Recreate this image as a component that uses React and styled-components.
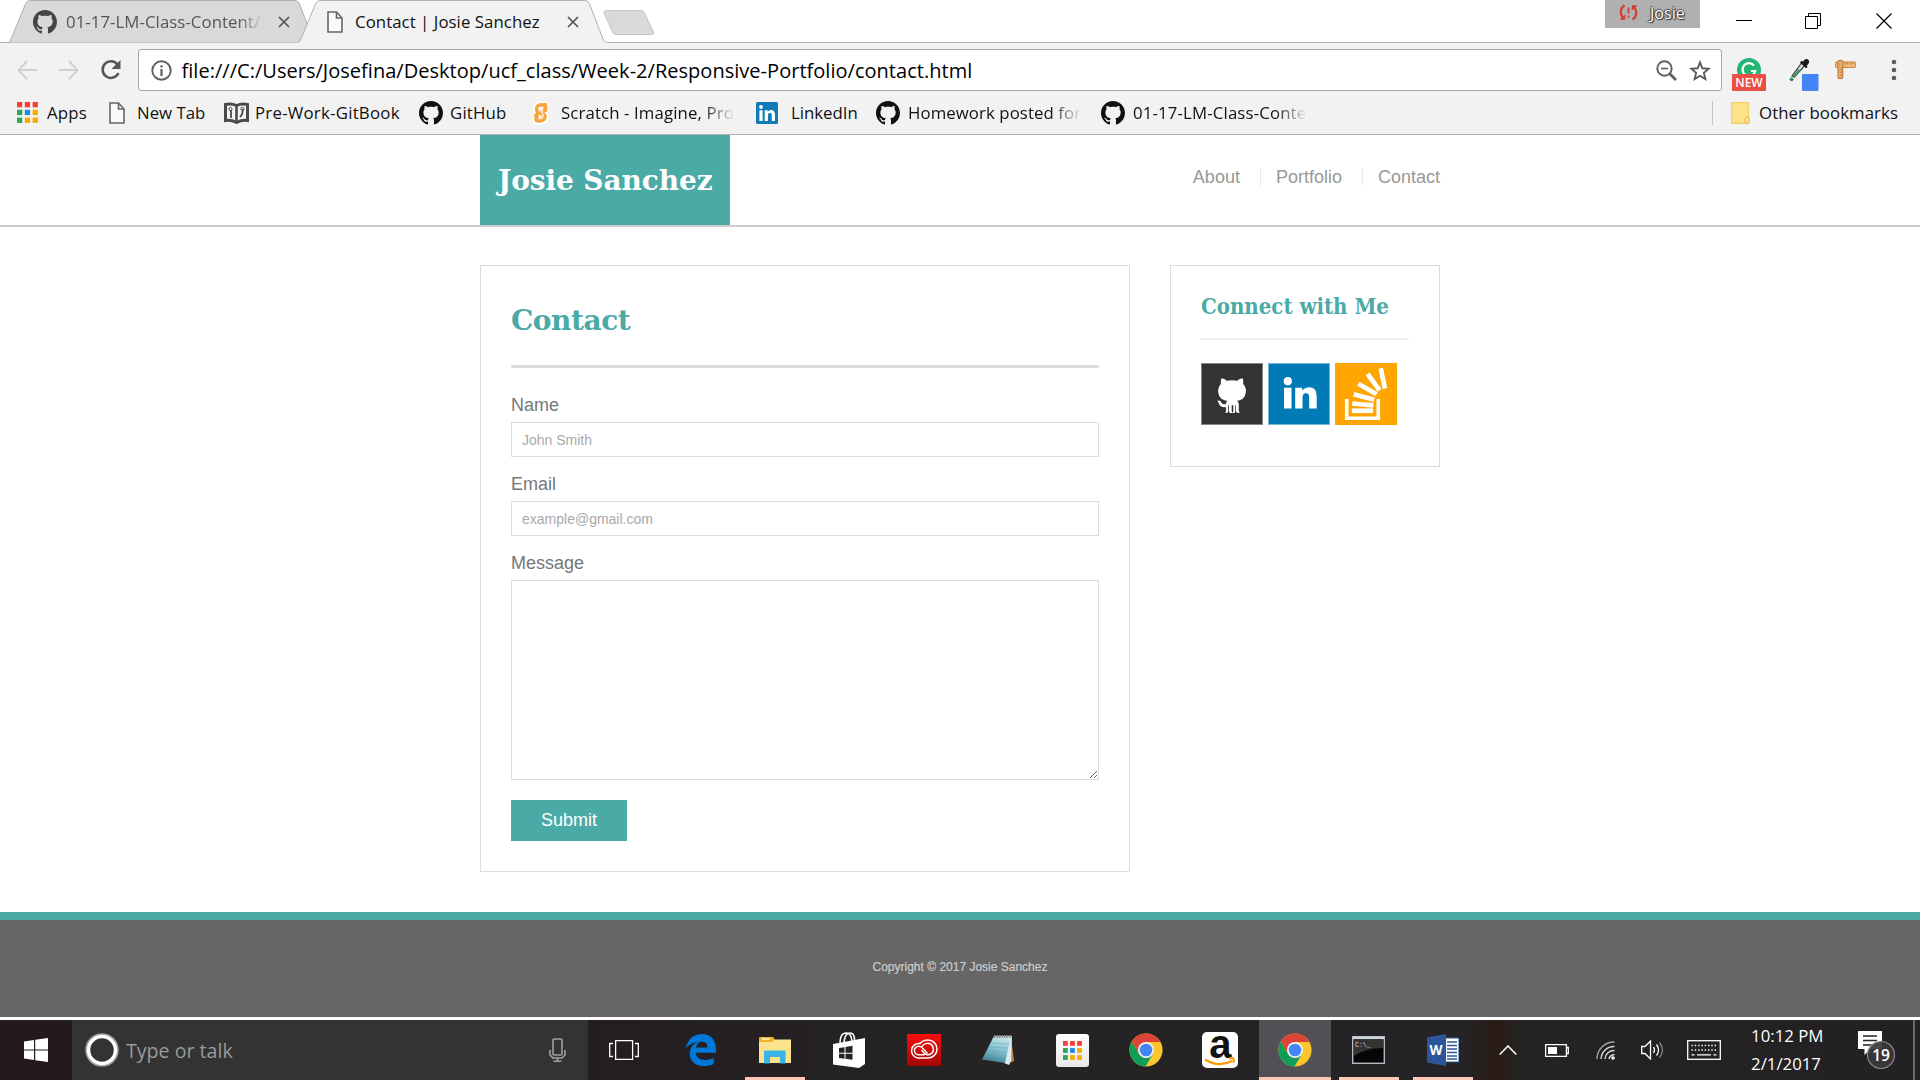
import React from "react";
import styled, { createGlobalStyle } from "styled-components";

const UI = '"Open Sans", "Noto Sans", sans-serif';
const SANS = '"Liberation Sans", Arial, sans-serif';
const SERIF = '"DejaVu Serif", Georgia, serif';
const SERIF_NARROW = '"DejaVu Serif Condensed", "DejaVu Serif", Georgia, serif';
const TEAL = "#4aaaa5";

const GlobalStyle = createGlobalStyle`
  * { box-sizing: border-box; }
  body { margin: 0; background: #fff; overflow: hidden; }
  svg { display: block; flex: none; }
`;

const Screen = styled.div`
  width: 1920px;
  height: 1080px;
  display: flex;
  flex-direction: column;
  overflow: hidden;
  background: #fff;
`;

/* ---------- Browser ---------- */

const TabStrip = styled.div`
  height: 43px;
  flex: none;
  display: flex;
  padding-left: 8px;
  font: 16.8px ${UI};
  letter-spacing: 0.06px;
  background: linear-gradient(#b1b1b1, #b1b1b1) 0 42px / 100% 1px no-repeat;
`;

const Tab = styled.div`
  display: grid;
  width: 310px;
  height: 43px;
  margin-right: -20px;
  z-index: ${(p) => (p.$active ? 2 : 1)};
  color: ${(p) => (p.$active ? "#111" : "#555")};
  > * { grid-area: 1 / 1; }
`;

const TabBody = styled.div`
  display: flex;
  align-items: center;
  padding: 0 25px 0 ${(p) => (p.$active ? 29 : 25)}px;
  z-index: 1;
`;

const Label = styled.span`
  flex: none;
  white-space: pre;
  width: ${(p) => (p.$w ? p.$w + "px" : "auto")};
  margin-left: ${(p) => p.$ml || 0}px;
  mask-image: ${(p) => (p.$fade ? `linear-gradient(90deg, #000 calc(100% - ${p.$fade}px), transparent)` : "none")};
`;

const TabClose = styled.div`
  margin-left: ${(p) => p.$ml}px;
`;

const NewTab = styled.div`
  margin: 10px 0 0 15px;
`;

const WindowButtons = styled.div`
  display: flex;
  margin-left: auto;
`;

const Profile = styled.div`
  width: 95px;
  height: 28px;
  display: flex;
  align-items: center;
  gap: 12px;
  padding: 0 0 3px 14px;
  background: #b0b0b0;
  color: #fff;
  font-size: 16px;
  text-shadow: 0 0 1px #333, 1px 1px 1px #333, -1px 0 1px #444, 0 -1px 1px #555;
  margin-right: 8px;
`;

const WinButton = styled.div`
  width: ${(p) => p.$w}px;
  height: 41px;
  display: flex;
  align-items: center;
  justify-content: center;
`;

const Toolbar = styled.div`
  height: 48px;
  flex: none;
  display: flex;
  align-items: flex-start;
  background: #f2f2f2;
  padding: 6px 0 0 17px;
`;

const NavIcons = styled.div`
  height: 42px;
  width: 121px;
  display: flex;
  align-items: center;
  gap: 21.500px;
`;

const Omnibox = styled.div`
  width: 1584px;
  height: 42px;
  display: flex;
  align-items: center;
  background: #fff;
  border: 1px solid #a8a8a8;
  border-radius: 3px;
  padding: 0 10px 0 12px;
  font: 20px ${UI};
  letter-spacing: 0.025px;
  color: #000;
`;

const OmniActions = styled.div`
  display: flex;
  gap: 12px;
  margin-left: auto;
`;

const Extensions = styled.div`
  display: flex;
  height: 42px;
  padding-left: 10px;
  align-items: center;
`;

const Bookmarks = styled.div`
  height: 44px;
  flex: none;
  display: flex;
  align-items: center;
  background: #f2f2f2;
  border-bottom: 1px solid #b1b1b1;
  font: 16.8px ${UI};
  letter-spacing: 0.08px;
  color: #111;
  padding-left: 17px;
`;

const Bookmark = styled.div`
  width: ${(p) => p.$w}px;
  letter-spacing: ${(p) => p.$ls || 0}px;
  display: flex;
  flex: none;
  align-items: center;
`;

const OtherBookmarks = styled.div`
  display: flex;
  align-items: center;
  margin-left: auto;
  width: 208px;
  height: 24px;
  border-left: 1px solid #c4c4c4;
  padding-left: 18px;
`;

/* ---------- Page ---------- */

const SiteHeader = styled.header`
  flex: none;
  height: 92px;
  border-bottom: 2px solid #ccc;
  font-family: ${SANS};
`;

const Container = styled.div`
  width: 960px;
  margin: 0 auto;
  display: flex;
  justify-content: space-between;
  align-items: flex-start;
`;

const Brand = styled.div`
  width: 250px;
  height: 90px;
  padding: 0 0 0 18px;
  display: flex;
  align-items: center;
  background: ${TEAL};
  color: #fff;
  font: bold 28px ${SERIF};
  letter-spacing: -0.1px;
  white-space: nowrap;
`;

const Menu = styled.nav`
  display: flex;
  margin-top: 33px;
`;

const MenuItem = styled.a`
  font-size: 18px;
  line-height: 18px;
  color: #999;
  & + & {
    margin-left: 20px;
    padding-left: 15px;
    border-left: 1px solid #eaeaea;
  }
`;

const Main = styled.main`
  flex: none;
  height: 685px;
  padding-top: 38px;
  font-family: ${SANS};
`;

const Card = styled.section`
  width: ${(p) => p.$w}px;
  border: 1px solid #ddd;
  background: #fff;
  padding: ${(p) => p.$pad};
`;

const PageTitle = styled.h1`
  margin: 0 0 27px;
  padding-bottom: 24px;
  border-bottom: 3px solid #ddd;
  font: bold 28px/40px ${SERIF};
  letter-spacing: -0.45px;
  color: ${TEAL};
`;

const SideTitle = styled.h2`
  margin: 0 0 23px;
  padding-bottom: 17px;
  border-bottom: 2px solid #eee;
  font: bold 22px/30px ${SERIF_NARROW};
  color: ${TEAL};
  white-space: nowrap;
`;

const FieldLabel = styled.label`
  display: block;
  font-size: 18px;
  line-height: 20px;
  margin-bottom: 7px;
  color: #777;
`;

const Input = styled.input`
  display: block;
  width: 100%;
  height: 35px;
  margin-bottom: 17px;
  border: 1px solid #ddd;
  padding: 0 10px;
  font: 14px ${SANS};
  outline: none;
  &::placeholder { color: #a9a9a9; opacity: 1; }
`;

const TextArea = styled.textarea`
  display: block;
  width: 100%;
  height: 200px;
  border: 1px solid #ddd;
  margin: 0 0 20px;
  outline: none;
  resize: both;
`;

const Submit = styled.button`
  display: block;
  width: 116px;
  height: 41px;
  border: 0;
  padding: 0;
  background: ${TEAL};
  color: #fff;
  font: 18px ${SANS};
`;

const SocialRow = styled.div`
  display: flex;
  gap: 5px;
`;

const SiteFooter = styled.footer`
  flex: none;
  height: 105px;
  margin-bottom: 3px;
  border-top: 8px solid ${TEAL};
  background: #666;
  color: #ccc;
  font: 12px/94px ${SANS};
  -webkit-text-stroke: 0.2px #ccc;
  text-align: center;
`;

/* ---------- Taskbar ---------- */

const Taskbar = styled.div`
  flex: none;
  height: 60px;
  display: flex;
  font-family: ${UI};
  color: #fff;
  background: linear-gradient(90deg, transparent 1470px, #2a1b14 1495px, transparent 1520px),
    linear-gradient(90deg, #24191f 0, #241d22 600px, #252324 900px, #252325 1400px, #232124 1920px);
  > * { flex: none; }
`;

const StartCell = styled.div`
  width: 72px;
  display: flex;
  align-items: center;
  justify-content: center;
`;

const Search = styled.div`
  width: 516px;
  display: flex;
  align-items: center;
  background: #333;
  padding: 0 22px 0 13px;
  font-size: 19.6px;
  color: #9a9a9a;
`;

const MicSlot = styled.div`
  margin-left: auto;
`;

const TaskView = styled.div`
  width: 76px;
  padding-left: 21px;
  display: flex;
  align-items: center;
`;

const TaskButton = styled.div`
  width: 74.2px;
  display: flex;
  align-items: center;
  justify-content: center;
  background: ${(p) =>
    p.$active
      ? "linear-gradient(#ffc8b5, #ffc8b5) 1px 57px / 72px 3px no-repeat, linear-gradient(#525054, #525054) 1px 0 / 72px 57px no-repeat"
      : p.$open
        ? "linear-gradient(#ffc8b5, #ffc8b5) 50% 57px / 60px 3px no-repeat"
        : "none"};
`;

const TrayCell = styled.div`
  width: ${(p) => p.$w}px;
  display: flex;
  align-items: center;
  justify-content: center;
`;

const Clock = styled.div`
  width: 105px;
  padding: 2px 0 0 15px;
  font-size: 16.8px;
  line-height: 28px;
  white-space: nowrap;
`;

const ShowDesktop = styled.div`
  margin-left: auto;
  width: 7px;
  border-left: 2px solid #69676a;
`;

/* ---------- Icons ---------- */

const GithubMark = ({ color = "#111" }) => (
  <svg width="24" height="24" viewBox="0 0 16 16" fill={color}>
    <path d="M8 0C3.58 0 0 3.58 0 8c0 3.54 2.29 6.53 5.47 7.59.4.07.55-.17.55-.38 0-.19-.01-.82-.01-1.49-2.01.37-2.53-.49-2.69-.94-.09-.23-.48-.94-.82-1.13-.28-.15-.68-.52-.01-.53.63-.01 1.08.58 1.23.82.72 1.21 1.87.87 2.33.66.07-.52.28-.87.51-1.07-1.78-.2-3.64-.89-3.64-3.95 0-.87.31-1.59.82-2.15-.08-.2-.36-1.02.08-2.12 0 0 .67-.21 2.2.82.64-.18 1.32-.27 2-.27s1.36.09 2 .27c1.53-1.04 2.2-.82 2.2-.82.44 1.1.16 1.92.08 2.12.51.56.82 1.27.82 2.15 0 3.07-1.87 3.75-3.65 3.95.29.25.54.73.54 1.48 0 1.07-.01 1.93-.01 2.2 0 .21.15.46.55.38A8.01 8.01 0 0 0 16 8c0-4.42-3.58-8-8-8z" />
  </svg>
);

const PageIcon = () => (
  <svg width="16" height="22" viewBox="0 0 16 22" fill="#fafafa" stroke="#666" strokeWidth="1.6">
    <path d="M1 1h8.5L15 7v14H1z" />
    <path d="M9.5 1v6H15" fill="none" />
  </svg>
);

const CloseX = () => (
  <svg width="12" height="12" viewBox="0 0 12 12" stroke="#555" strokeWidth="1.7">
    <path d="M1 1l10 10M11 1L1 11" />
  </svg>
);

const Arrow = ({ flip }) => (
  <svg width="20" height="20" viewBox="0 0 20 20" fill="none" stroke="#d0d0d0" strokeWidth="2">
    <path d={flip ? "M0 10h18.5M10 1l8.5 9-8.5 9" : "M20 10H1.5M10 1L1.5 10l8.5 9"} />
  </svg>
);

const Reload = () => (
  <svg width="22" height="22" viewBox="0 0 22 22">
    <path d="M17.500 5.500A8.300 8.300 0 1 0 18.500 14" fill="none" stroke="#555" strokeWidth="2.5" />
    <path d="M20.500 1v9h-9z" fill="#555" />
  </svg>
);

const Info = () => (
  <svg width="21" height="21" viewBox="0 0 21 21">
    <circle cx="10.5" cy="10.5" r="9.2" fill="none" stroke="#606060" strokeWidth="1.9" />
    <path d="M9.4 5.2h2.2v2.2H9.4zM9.4 9h2.2v7H9.4z" fill="#606060" />
  </svg>
);

const ZoomOut = () => (
  <svg width="21" height="21" viewBox="0 0 21 21" fill="none" stroke="#606060">
    <circle cx="8.5" cy="8.5" r="7.2" strokeWidth="1.9" />
    <path d="M5 8.5h7" strokeWidth="1.6" />
    <path d="M13.5 13.5l6.5 6.5" strokeWidth="2.8" />
  </svg>
);

const Star = () => (
  <svg width="22" height="21" viewBox="0 0 22 21" fill="none" stroke="#5a5a5a" strokeWidth="1.9">
    <path d="M11 2.4l2.4 5.9 6.3.5-4.8 4.1 1.5 6.2-5.4-3.3-5.4 3.3 1.5-6.2-4.8-4.1 6.3-.5z" />
  </svg>
);

const Badge = styled.span`
  grid-area: 1 / 1;
  align-self: end;
  width: 34px;
  height: 17px;
  border-radius: 1px;
  background: #ea4f45;
  color: #fff;
  font: 600 12px/18px ${UI};
  text-align: center;
`;

const ExtSlot = styled.div`
  display: grid;
  width: ${(p) => p.$w}px;
  height: 42px;
  margin-left: ${(p) => p.$ml || 0}px;
  align-items: center;
  > svg { grid-area: 1 / 1; }
`;

const Grammarly = () => (
  <ExtSlot $w={34}>
    <svg width="34" height="42" viewBox="0 0 34 42">
      <circle cx="17" cy="21" r="12" fill="#22b573" />
      <path d="M22 16.500a6.500 6.500 0 1 0 1.300 5.500h-4.300" fill="none" stroke="#fff" strokeWidth="2.2" />
    </svg>
    <Badge>NEW</Badge>
  </ExtSlot>
);

const Dropper = () => (
  <svg width="30" height="42" viewBox="0 0 30 42">
    <path d="M3 27L12.500 14l3.200 2.600L5.500 28z" fill="#ddd" stroke="#333" strokeWidth="1.2" />
    <path d="M4 27l5.500-7 2 1.500L6 28z" fill="#3c9a5f" />
    <path d="M11 13.500l1.500-1.700 1.600 1C15 10.500 17 9.500 19 10.500c2 1.500 1 4.500-1.200 6l.7 1.500-1.500 1.300z" fill="#1a1a1a" />
    <circle cx="2.6" cy="30.3" r="1.9" fill="#2f8a55" />
    <rect x="13" y="25" width="16.5" height="17" rx="1" fill="#4285f4" />
  </svg>
);

const Ruler = () => (
  <svg width="21" height="20" viewBox="0 0 21 20">
    <rect x="0.5" y="2" width="20" height="5.5" rx="0.8" fill="#efb878" stroke="#c78847" />
    <rect x="3" y="0.5" width="4.8" height="18" rx="0.8" fill="#eaa964" stroke="#b5753a" />
    <path d="M10 2.500v2M12.500 2.500v2M15 2.500v2M17.500 2.500v2M5.600 9h2M5.600 12h2M5.600 15h2" stroke="#a86c33" strokeWidth="0.8" />
  </svg>
);

const Dots = () => (
  <svg width="6" height="24" viewBox="0 0 6 24" fill="#5a5a5a">
    <circle cx="3" cy="4" r="2.3" /><circle cx="3" cy="12" r="2.3" /><circle cx="3" cy="20" r="2.3" />
  </svg>
);

const GRID_COLOURS = ["#f44336", "#f44336", "#f44336", "#2fa35a", "#1e88e5", "#fbab00", "#2fa35a", "#fbab00", "#fbab00"];

const AppsGrid = ({ size = 21 }) => (
  <svg width={size} height={size} viewBox="0 0 21 21">
    {GRID_COLOURS.map((c, i) => (
      <rect key={i} x={(i % 3) * 7.8} y={Math.floor(i / 3) * 7.8} width="5.3" height="5.3" fill={c} />
    ))}
  </svg>
);

const GitBook = () => (
  <svg width="25" height="22" viewBox="0 0 25 22" fill="none" stroke="#4a4a4a">
    <path d="M1.500 2.500Q7 1 12.500 3.500Q18 1 23.500 2.500V18.500Q18 17.500 12.500 20.500Q7 17.500 1.500 18.500z" strokeWidth="3" fill="#f4f4f4" />
    <path d="M12.500 3.500v17" strokeWidth="2.6" />
    <path d="M7 8v8M18.500 7v3q0 3-2.500 5" strokeWidth="1.8" />
    <circle cx="6.500" cy="7" r="1.6" /><circle cx="18.500" cy="6.800" r="1.6" />
  </svg>
);

const Scratch = () => (
  <svg width="18" height="24" viewBox="0 0 18 24" fill="none" strokeLinecap="round">
    <path d="M12.500 4.500Q5.500 3 5 8Q5 11 9 12Q13 13.500 12.500 16.500Q11 20.500 5 19" stroke="#fff" strokeWidth="8.5" />
    <path d="M12.500 4.500Q5.500 3 5 8Q5 11 9 12Q13 13.500 12.500 16.500Q11 20.500 5 19M4.500 14v5M13 4v5" stroke="#f7a53b" strokeWidth="4.4" />
    <path d="M11.500 6.500Q7 5.500 6.500 8Q7 10.500 9.500 11.200Q12 13 11 16Q9.500 18.500 6 17.500" stroke="#fff3df" strokeWidth="1.2" />
  </svg>
);

const LinkedInSmall = () => (
  <svg width="22" height="22" viewBox="0 0 22 22">
    <rect width="22" height="22" rx="1.5" fill="#0f7bb8" />
    <circle cx="5" cy="5" r="1.9" fill="#fff" />
    <path d="M3.400 8.300h3.200V19H3.400zM8.700 8.300h3v1.500q1-1.800 3.300-1.800 4 0 4 4.800V19h-3.200v-5.600q0-2.600-1.800-2.600-2.100 0-2.100 2.600V19H8.700z" fill="#fff" />
  </svg>
);

const Folder = () => (
  <svg width="19" height="22" viewBox="0 0 19 22">
    <path d="M.7.7h16.600v20.600H.7z" fill="#ffe38a" stroke="#f3c84b" />
    <path d="M14 21.300v-5q2-2.500 4.200 0v5z" fill="#ffe38a" stroke="#e9b93a" />
  </svg>
);

const SyncIcon = () => (
  <svg width="19" height="17" viewBox="0 0 19 17" fill="none" stroke="#d23f2e" strokeWidth="2.2">
    <path d="M5.500 1.500Q1.500 4 1.800 9Q2.300 12 4 14" />
    <path d="M13.500 15.500Q17.500 13 17.200 8Q16.700 5 15 3" />
    <path d="M.5 15.800h5.700v-5.500zM18.500 1.200h-5.700v5.500z" fill="#d23f2e" stroke="none" />
    <path d="M9.500 3.500v6M9.500 11.500v2.200" strokeWidth="1.8" />
  </svg>
);

const GithubTile = () => (
  <svg width="62" height="62" viewBox="0 0 62 62">
    <rect x=".5" y=".5" width="61" height="61" fill="#333" stroke="#858585" />
    <g fill="#fff">
      <path d="M20.500 15.200q3.200.3 5.300 2.500q5.200-1 10.400 0q2.200-2.200 5.400-2.500q1.300 3.300.5 5.800q3.300 3.400 2.800 8q-.6 9-11.900 9.300h-3.900q-11.300-.3-11.900-9.300q-.4-4.600 2.700-8q-.7-2.500.6-5.800z" />
      <path d="M26.500 37.500h9.500q2 2 1.800 4.500v5.600q.2 1.200 1.200 2.200h-3q-1-.6-1-2v-5.500h-.7v6q0 1-.8 1.700h-2.200q1-.8 1-1.900v-5.800h-1.600v5.800q0 1.100 1 1.900h-2.700q-1-.7-1-1.700v-6h-.8v5.500q0 1.600-1 2h-2.300q1.200-.9 1.200-2.200v-3.400q-5.500.6-7-3.200q-.8-2.200-1.700-3.300q2.800-.8 4.100 2q1.500 2.100 4.300 1.300q.2-1.900 1.700-3.500z" />
    </g>
  </svg>
);

const LinkedInTile = () => (
  <svg width="62" height="62" viewBox="0 0 62 62">
    <rect x=".5" y=".5" width="61" height="61" fill="#007bb6" stroke="#74b6d6" />
    <g fill="#fff">
      <circle cx="19.800" cy="18.200" r="4.1" />
      <path d="M16 24.700h7.500v20.800H16zM27.200 24.700h7v3q2.500-3.500 7-3.500 7.500 0 7.500 9v12.300h-7.500V34.700q0-4.400-3.200-4.400-3.500 0-3.500 4.400v10.800h-7.300z" />
    </g>
  </svg>
);

const StackTile = () => (
  <svg width="62" height="62" viewBox="0 0 62 62" fill="none" stroke="#fff">
    <rect width="62" height="62" fill="#ffa500" stroke="none" />
    <path d="M11.700 36v19.200h31.600V36" strokeWidth="3.6" />
    <g strokeWidth="4.7">
      <path d="M16.800 47.700h21.300" />
      <path d="M17.200 40.500l21.300 1.800" />
      <path d="M18.700 31.200l20.500 5.600" />
      <path d="M23.200 20.800l18.400 10.500" />
      <path d="M32.600 11l12 16.300" />
      <path d="M45.700 5.200l4.200 20.200" />
    </g>
  </svg>
);

const WindowsLogo = () => (
  <svg width="24" height="24" viewBox="0 0 24 24" fill="#fff">
    <path d="M0 3.400l10-1.400v9.500H0zM11.200 1.800L24 0v11.500H11.200zM0 12.500h10V22L0 20.600zM11.200 12.500H24V24l-12.800-1.800z" />
  </svg>
);

const Ring = () => (
  <svg width="34" height="34" viewBox="0 0 34 34" fill="none">
    <circle cx="17" cy="17" r="15.8" stroke="#9b9b9b" strokeWidth="2" />
    <circle cx="17" cy="17" r="13.5" stroke="#fff" strokeWidth="3.5" />
  </svg>
);

const Mic = () => (
  <svg width="17" height="24" viewBox="0 0 17 24" fill="none" stroke="#a0a0a0" strokeWidth="1.6">
    <rect x="4" y="1" width="9" height="16" rx="1" />
    <path d="M1 12v5l3 3h9l3-3v-5M8.500 20v3M4.500 23.200h8" />
  </svg>
);

const TaskViewIcon = () => (
  <svg width="30" height="20" viewBox="0 0 30 20" fill="none" stroke="#fff" strokeWidth="1.3">
    <path d="M6.600.7h17v18.600h-17zM4 3.500H.7v13H4M26 3.500h3.300v13H26" />
  </svg>
);

const Edge = () => (
  <svg width="30" height="32" viewBox="0 0 30 32" fill="#0078d7">
    <path d="M0 14.500C1.500 5 8 0 16 0c8.500 0 14 6 14 14.500v4.300H9.800c.2 4.700 4.300 7.200 9.200 7.200 3.500 0 6.400-1 8.700-2.300V30c-3 1.500-6.400 2-10 2C9 32 3.700 27 3.700 19.600c0-5.200 3-9.300 7.700-11.600C6 8.800 2.300 11 0 14.500zM10 13.400h11.500c0-3.600-2-5.700-5.500-5.700-3.200 0-5.500 2.300-6 5.700z" />
  </svg>
);

const Explorer = () => (
  <svg width="32" height="27" viewBox="0 0 32 27">
    <path d="M0 1q0-1 1-1h13l2 3v3H0z" fill="#f0b429" />
    <path d="M0 5h13l2.500-2.500H32V26H0z" fill="#fce28c" />
    <path d="M3 2h8" stroke="#fff3c8" strokeWidth="1.5" />
    <path d="M5 26.500V13.500h21.500v13H21V20H11v6.500z" fill="#3ab4e6" />
  </svg>
);

const Store = () => (
  <svg width="32" height="36" viewBox="0 0 32 36">
    <path d="M7 11Q7 1 13.500 1Q18 1 19 9M11 10Q12 1 17 1Q21.500 1 21.500 8" fill="none" stroke="#fff" strokeWidth="1.6" />
    <path d="M0 12l32-6v26l-6 4-26-3.500z" fill="#fff" />
    <path d="M6 16l5.500-.8v5.500H6zM12.500 15l7-1.200v6.900h-7zM6 21.700h5.500v5l-5.500-.6zM12.500 21.700h7v6l-7-.9z" fill="#252324" />
  </svg>
);

const Creative = () => (
  <svg width="34" height="32" viewBox="0 0 34 32">
    <defs>
      <linearGradient id="cc" x1="0" y1="0" x2="0" y2="1">
        <stop offset="0" stopColor="#fa0f0f" />
        <stop offset="1" stopColor="#a30606" />
      </linearGradient>
    </defs>
    <rect width="34" height="32" fill="url(#cc)" />
    <g fill="none" stroke="#fff" strokeWidth="1.5">
      <path d="M13 9.500C15 7 18 6 21 6c5 0 9 4 9 9s-4 9-9 9H11.500a7.300 7.300 0 1 1 1.500-14.500z" />
      <path d="M17.500 20.800h-6a4.300 4.300 0 1 1 2-8.200c2.500 1 4.500 4.500 7 6.800M14.500 13.500c2-5 8.500-5.500 11-1.500 2.500 4.500-.5 8.800-5 8.800-2 0-3.500-1.500-6-4.800" />
    </g>
  </svg>
);

const Notepad = () => (
  <svg width="32" height="32" viewBox="0 0 32 32">
    <defs>
      <linearGradient id="note" x1=".6" y1="0" x2=".3" y2="1">
        <stop offset="0" stopColor="#c9e6ea" />
        <stop offset=".5" stopColor="#7fbfcd" />
        <stop offset="1" stopColor="#3d7f8e" />
      </linearGradient>
    </defs>
    <path d="M29 3l3 24-5 2z" fill="#b79256" />
    <path d="M12 2h18l-1 25-2 4-5-2z" fill="#dfeaee" />
    <path d="M12 2h17l-6 27-23-3.500z" fill="url(#note)" />
    <path d="M9 9l18 1M7.500 13l18.500 1M5.500 17l19.500 1.500" stroke="#68a9b8" strokeWidth=".6" />
    <path d="M12 2.500h18" stroke="#888" strokeWidth="3" strokeDasharray="1.5 1" />
  </svg>
);

const LauncherTile = styled.div`
  width: 33px;
  height: 33px;
  border-radius: 3px;
  background: linear-gradient(#fff, #e8e8e8);
  display: flex;
  align-items: center;
  justify-content: center;
`;

const Chrome = () => (
  <svg width="34" height="34" viewBox="-17 -17 34 34">
    <circle r="16.6" fill="#fdc62f" />
    <path d="M0-8H14.560A16.600 16.600 0 0 0-14.200-8.600L-6.930 4z" fill="#db4437" />
    <path d="M-14.300-8.400A16.600 16.600 0 0 0-.5 16.600L6.930 4Q0 10-6.930 4z" fill="#0f9d58" />
    <circle r="8" fill="#f1f1f1" />
    <circle r="6.3" fill="#4285f4" />
  </svg>
);

const AmazonTile = styled.div`
  width: 36px;
  height: 36px;
  border-radius: 5px;
  background: #fff;
  display: grid;
  color: #111;
  font: bold 40px/24px ${SANS};
  text-align: center;
  > * { grid-area: 1 / 1; }
`;

const Amazon = () => (
  <AmazonTile>
    <span>a</span>
    <svg width="36" height="36" viewBox="0 0 36 36" fill="none" stroke="#f90" strokeWidth="2.3">
      <path d="M3 27.500q14 8.500 27 1.500M27 26.500q6-2 4.500 4" />
    </svg>
  </AmazonTile>
);

const Cmd = () => (
  <svg width="33" height="28" viewBox="0 0 33 28">
    <rect x=".7" y=".7" width="31.6" height="26.6" fill="#050505" stroke="#b5bcc4" strokeWidth="1.4" />
    <path d="M1 2h31" stroke="#cdd5dd" strokeWidth="2.5" />
    <path d="M2 4h29v8Q14 12 2 20z" fill="#333" />
    <text x="3" y="11" fill="#ddd" fontSize="6.5" fontFamily="Liberation Mono, monospace">C:\_</text>
  </svg>
);

const Word = () => (
  <svg width="32" height="32" viewBox="0 0 32 32">
    <rect x="16" y="4" width="16" height="24" fill="#fff" stroke="#2b579a" />
    <path d="M20 8h10M20 11.500h10M20 15h10M20 18.500h10M20 22h10M20 25h10" stroke="#2b579a" strokeWidth="1.5" />
    <path d="M0 3.500L19 0v32L0 28.500z" fill="#2b579a" />
    <text x="2.5" y="21" fill="#fff" fontSize="14" fontWeight="700" fontFamily="Open Sans, sans-serif" textLength="13" lengthAdjust="spacingAndGlyphs">W</text>
  </svg>
);

const Chevron = () => (
  <svg width="18" height="10" viewBox="0 0 18 10" fill="none" stroke="#fff" strokeWidth="1.5">
    <path d="M.7 9.500L9 1l8.300 8.500" />
  </svg>
);

const Battery = () => (
  <svg width="24" height="13" viewBox="0 0 24 13">
    <path d="M.6.6h20.800v11.800H.6zM21.500 3.500h1.800v6h-1.800" fill="none" stroke="#fff" strokeWidth="1.3" />
    <rect x="3" y="3" width="9" height="7" fill="#fff" />
  </svg>
);

const Wifi = () => (
  <svg width="19" height="19" viewBox="0 0 19 19" fill="none" strokeWidth="1.4" stroke="#d8d8d8">
    <path d="M1 18A17 17 0 0 1 18.500 1" stroke="#a5a5a5" />
    <path d="M5 18A13 13 0 0 1 18.500 5.500M9 18A9 9 0 0 1 18.500 9.500M13 18q.8-4 5.500-4.500" />
    <circle cx="17" cy="17" r="1.8" fill="#fff" stroke="none" />
  </svg>
);

const Speaker = () => (
  <svg width="23" height="20" viewBox="0 0 23 20" fill="none" stroke="#fff" strokeWidth="1.3">
    <path d="M.7 6.500H4L9.500 1v18L4 13.500H.7z" />
    <path d="M12.500 7q2 3 0 6M15.500 4.500q4 5.500 0 11" />
    <path d="M18.500 2.500q6 7.500 0 15" stroke="#888" />
  </svg>
);

const Keyboard = () => (
  <svg width="34" height="20" viewBox="0 0 34 20" fill="none" stroke="#fff" strokeWidth="1.3">
    <rect x=".7" y=".7" width="32.6" height="18.6" />
    <path d="M4.500 5.500h25M4.500 10h25" strokeDasharray="1.4 1.9" />
    <path d="M4.500 14.800h3M10 14.800h14M26.500 14.800h3" />
  </svg>
);

const Notifications = () => (
  <svg width="38" height="38" viewBox="0 0 38 38">
    <path d="M0 0h24v18H12.500L6.500 24v-6H0z" fill="#fff" />
    <path d="M5 5h14M5 9.500h14M5 14h9" stroke="#252325" strokeWidth="1.5" />
    <circle cx="23" cy="24" r="13.5" fill="#3a383a" fillOpacity=".93" stroke="#8a888a" strokeWidth="1.2" />
    <text x="23" y="29.700" fill="#fff" fontSize="15.5" fontWeight="600" textAnchor="middle" fontFamily="Open Sans, sans-serif">19</text>
  </svg>
);

/* ---------- Data ---------- */

const BOOKMARKS = [
  { icon: <AppsGrid />, w: 92, gap: 9, text: "Apps", ls: 0.2 },
  { icon: <PageIcon />, w: 115, gap: 12, text: "New Tab" },
  { icon: <GitBook />, w: 195, gap: 6, text: "Pre-Work-GitBook", ls: 0.25 },
  { icon: <GithubMark />, w: 113, gap: 7, text: "GitHub", ls: 0.2 },
  { icon: <Scratch />, w: 224, gap: 11, text: "Scratch - Imagine, Pro", clip: 174, ls: 0.12 },
  { icon: <LinkedInSmall />, w: 120, gap: 13, text: "LinkedIn" },
  { icon: <GithubMark />, w: 225, gap: 8, text: "Homework posted for", clip: 174, ls: 0.08 },
  { icon: <GithubMark />, w: 224, gap: 8, text: "01-17-LM-Class-Conte", clip: 174, ls: 0.15 },
];

const APPS = [
  { icon: <Edge /> },
  { icon: <Explorer />, open: true },
  { icon: <Store /> },
  { icon: <Creative /> },
  { icon: <Notepad /> },
  { icon: <LauncherTile><AppsGrid size={19} /></LauncherTile> },
  { icon: <Chrome /> },
  { icon: <Amazon /> },
  { icon: <Chrome />, active: true },
  { icon: <Cmd />, open: true },
  { icon: <Word />, open: true },
];

const TabShape = ({ fill, active }) => (
  <svg width="310" height="43" viewBox="0 0 310 43">
    <path d="M0 42.500Q2 42 3 39L17.500 4Q19 .5 22 .5H287Q290 .5 291.500 4L305 39Q306.500 42.500 310 42.500" fill={fill} stroke="#b1b1b1" />
    {active && <path d="M1 42.500h308" stroke={fill} strokeWidth="1.2" />}
  </svg>
);

export default function App() {
  return (
    <Screen>
      <GlobalStyle />
      <TabStrip>
        <Tab>
          <TabShape fill="#d9d9d9" />
          <TabBody>
            <GithubMark color="#444" />
            <Label $ml={9} $w={198} $fade={26}>01-17-LM-Class-Content/</Label>
            <TabClose $ml={14}><CloseX /></TabClose>
          </TabBody>
        </Tab>
        <Tab $active>
          <TabShape fill="#f2f2f2" active />
          <TabBody $active>
            <PageIcon />
            <Label $ml={12} $w={190}>Contact | Josie Sanchez</Label>
            <TabClose $ml={22}><CloseX /></TabClose>
          </TabBody>
        </Tab>
        <NewTab>
          <svg width="52" height="26" viewBox="0 0 52 26">
            <path d="M3.500.5H38Q40.500.5 41.500 3L50.500 22Q51.500 24.500 49 24.500H13Q10.500 24.500 9.500 22L1 3Q.5.5 3.500.5z" fill="#d9d9d9" stroke="#c6c6c6" />
          </svg>
        </NewTab>
        <WindowButtons>
          <Profile><SyncIcon />Josie</Profile>
          <WinButton $w={71}>
            <svg width="16" height="2" viewBox="0 0 16 2"><path d="M0 .5h16" stroke="#000" /></svg>
          </WinButton>
          <WinButton $w={68}>
            <svg width="16" height="16" viewBox="0 0 16 16" fill="none" stroke="#000">
              <path d="M.5 3.500h12v12H.5zM3.500 3.500v-3h12v12h-3" />
            </svg>
          </WinButton>
          <WinButton $w={73}>
            <svg width="16" height="16" viewBox="0 0 16 16" stroke="#000" strokeWidth="1.2"><path d="M.5.5l15 15M15.500.5l-15 15" /></svg>
          </WinButton>
        </WindowButtons>
      </TabStrip>

      <Toolbar>
        <NavIcons><Arrow /><Arrow flip /><Reload /></NavIcons>
        <Omnibox>
          <Info />
          <Label $ml={9.5}>file:///C:/Users/Josefina/Desktop/ucf_class/Week-2/Responsive-Portfolio/contact.html</Label>
          <OmniActions><ZoomOut /><Star /></OmniActions>
        </Omnibox>
        <Extensions>
          <Grammarly />
          <ExtSlot $w={30} $ml={23}><Dropper /></ExtSlot>
          <ExtSlot $w={21} $ml={16}><Ruler /></ExtSlot>
          <ExtSlot $w={6} $ml={35}><Dots /></ExtSlot>
        </Extensions>
      </Toolbar>

      <Bookmarks>
        {BOOKMARKS.map((b, i) => (
          <Bookmark key={i} $w={b.w} $ls={b.ls}>
            {b.icon}
            <Label $ml={b.gap} $w={b.clip} $fade={b.clip ? 32 : 0}>{b.text}</Label>
          </Bookmark>
        ))}
        <OtherBookmarks><Folder /><Label $ml={9}>Other bookmarks</Label></OtherBookmarks>
      </Bookmarks>

      <SiteHeader>
        <Container>
          <Brand>Josie Sanchez</Brand>
          <Menu>
            <MenuItem>About</MenuItem>
            <MenuItem>Portfolio</MenuItem>
            <MenuItem>Contact</MenuItem>
          </Menu>
        </Container>
      </SiteHeader>

      <Main>
        <Container>
          <Card $w={650} $pad="35px 30px 30px">
            <PageTitle>Contact</PageTitle>
            <FieldLabel>Name</FieldLabel>
            <Input placeholder="John Smith" />
            <FieldLabel>Email</FieldLabel>
            <Input placeholder="example@gmail.com" />
            <FieldLabel>Message</FieldLabel>
            <TextArea />
            <Submit>Submit</Submit>
          </Card>
          <Card $w={270} $pad="25px 30px 41px">
            <SideTitle>Connect with Me</SideTitle>
            <SocialRow><GithubTile /><LinkedInTile /><StackTile /></SocialRow>
          </Card>
        </Container>
      </Main>

      <SiteFooter>Copyright © 2017 Josie Sanchez</SiteFooter>

      <Taskbar>
        <StartCell><WindowsLogo /></StartCell>
        <Search>
          <Ring />
          <Label $ml={7}>Type or talk</Label>
          <MicSlot><Mic /></MicSlot>
        </Search>
        <TaskView><TaskViewIcon /></TaskView>
        {APPS.map((a, i) => (
          <TaskButton key={i} $open={a.open} $active={a.active}>{a.icon}</TaskButton>
        ))}
        <TrayCell $w={56}><Chevron /></TrayCell>
        <TrayCell $w={42}><Battery /></TrayCell>
        <TrayCell $w={54}><Wifi /></TrayCell>
        <TrayCell $w={40}><Speaker /></TrayCell>
        <TrayCell $w={64}><Keyboard /></TrayCell>
        <Clock>10:12 PM<br />2/1/2017</Clock>
        <TrayCell $w={72}><Notifications /></TrayCell>
        <ShowDesktop />
      </Taskbar>
    </Screen>
  );
}
